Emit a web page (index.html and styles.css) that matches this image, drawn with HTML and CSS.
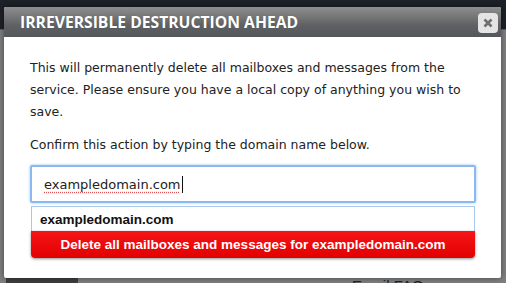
FILE: index.html
```html
<!DOCTYPE html>
<html>
<head>
<meta charset="utf-8">
<link rel="stylesheet" href="styles.css">
</head>
<body>
<div class="page">
  <div class="page-top"></div>
  <div class="page-main">
    <div class="page-foot">
      <span class="foot-dark"></span>
      <span class="foot-link">Email FAQ</span>
    </div>
  </div>
</div>
<div class="modal">
  <div class="modal-head">
    <h1 class="modal-title">IRREVERSIBLE DESTRUCTION AHEAD</h1>
    <button class="close" aria-label="Close">
      <svg width="10" height="10" viewBox="0 0 10 10"><path d="M1.5 1.5 L8.5 8.5 M8.5 1.5 L1.5 8.5" stroke="#6f6f6f" stroke-width="2.6" stroke-linecap="butt"/></svg>
    </button>
  </div>
  <div class="modal-body">
    <p class="msg">This will permanently delete all mailboxes and messages from the service. Please ensure you have a local copy of anything you wish to save.</p>
    <p class="msg confirm">Confirm this action by typing the domain name below.</p>
    <div class="field">
      <div class="input"><span class="typed">exampledomain.com</span><span class="caret"></span></div>
      <div class="suggest">exampledomain.com</div>
      <button class="danger">Delete all mailboxes and messages for exampledomain.com</button>
    </div>
  </div>
</div>
</body>
</html>
```
FILE: styles.css
```css
html, body {
  margin: 0;
  padding: 0;
  width: 506px;
  height: 283px;
  overflow: hidden;
}
* {
  box-sizing: border-box;
}
body {
  position: relative;
  background: #7d7d7d;
  font-family: "DejaVu Sans", Verdana, sans-serif;
}
.page {
  position: absolute;
  inset: 0;
  display: flex;
  flex-direction: column;
}
.page-top {
  height: 30px;
  background: #1d2128;
  border-bottom: 1px solid #5a5d62;
}
.page-main {
  flex: 1;
  display: flex;
  flex-direction: column;
  justify-content: flex-end;
  background: #7f7f7f;
}
.page-foot {
  height: 5px;
  display: flex;
  overflow: hidden;
}
.foot-dark {
  width: 72px;
  margin-left: 6px;
  background: #3e3e3e;
}
.foot-link {
  margin-left: 274px;
  font-family: "Liberation Sans", Arial, sans-serif;
  font-size: 15px;
  line-height: 15px;
  color: #222;
}
.modal {
  position: absolute;
  left: 4px;
  top: 7px;
  width: 497px;
  height: 271px;
  background: #fff;
  border-radius: 2px;
  box-shadow: 0 0 6px rgba(0,0,0,0.45);
  overflow: hidden;
}
.modal-head {
  height: 30px;
  background: linear-gradient(#8e8e8e, #5f6164 60%, #53575b);
  display: flex;
  align-items: center;
  justify-content: space-between;
  padding: 0 3px 0 16px;
}
.modal-title {
  margin: 0;
  font-family: "Open Sans", sans-serif;
  font-weight: 700;
  font-size: 15.7px;
  color: #fff;
  text-shadow: 0 0 1px rgba(0,0,0,0.3);
}
.close {
  width: 20px;
  height: 20px;
  margin-top: 1px;
  border: none;
  border-radius: 4px;
  background: #e4e4e4;
  padding: 0;
  display: flex;
  align-items: center;
  justify-content: center;
}
.modal-body {
  padding: 20px 25px 0 26px;
}
.msg {
  margin: 0;
  font-size: 12.5px;
  line-height: 22px;
  color: #222;
}
.confirm {
  margin-top: 11px;
}
.field {
  margin-top: 9px;
  display: flex;
  flex-direction: column;
}
.input {
  height: 38px;
  border: 2px solid #8ab8ef;
  border-radius: 2px;
  box-shadow: 0 0 3px #9cc4f4;
  display: flex;
  align-items: center;
  padding-left: 12px;
  font-size: 13px;
  color: #222;
}
.typed {
  text-decoration: underline dotted #e25050;
  text-underline-offset: 3px;
}
.caret {
  width: 1px;
  height: 17px;
  background: #111;
  margin-left: 1px;
}
.suggest {
  margin: 3px 1px 0;
  height: 25px;
  border: 1px solid #a8c8ee;
  border-bottom: none;
  padding-left: 8px;
  display: flex;
  align-items: center;
  font-family: "Liberation Sans", Arial, sans-serif;
  font-weight: 700;
  font-size: 13.5px;
  color: #111;
}
.danger {
  margin: 0 1px;
  height: 27px;
  border: none;
  border-radius: 0 0 4px 4px;
  background: linear-gradient(#f51418, #e20000);
  box-shadow: 0 1px 3px rgba(0,0,0,0.45);
  color: #fff;
  font-family: "Liberation Sans", Arial, sans-serif;
  font-weight: 700;
  font-size: 13.5px;
  padding: 0;
}
```
